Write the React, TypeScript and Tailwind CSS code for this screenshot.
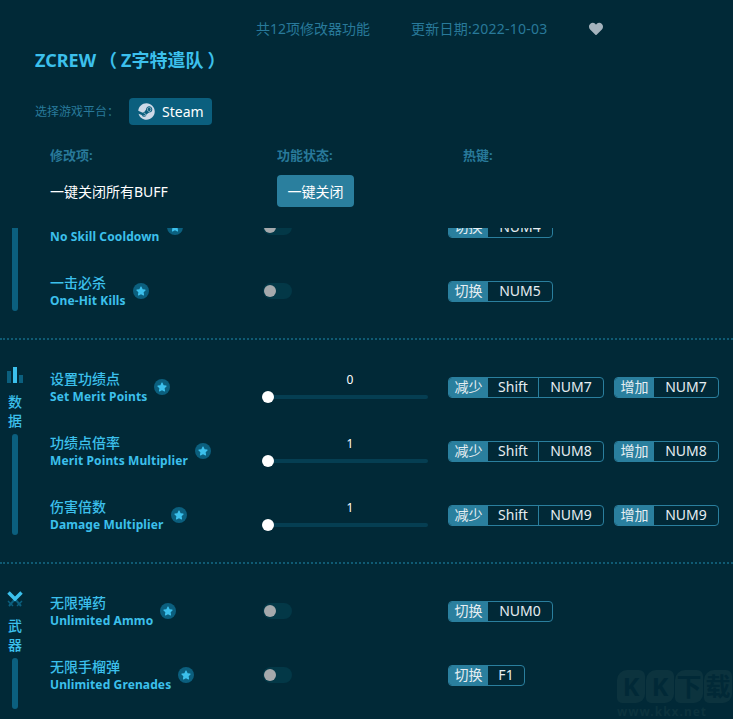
import { FaHeart, FaStar, FaSteam } from "react-icons/fa";

const cjk = "font-['Noto_Sans','Noto_Sans_CJK_SC',sans-serif]";

type Hotkey = { label: string; keys: string[] };

type Feature = {
  zh: string;
  en: string;
  value?: number;
  hotkeys: Hotkey[];
};

const keyWidth = (k: string) => {
  if (k === "Shift") return "w-[51px] border-r border-[#2a7f9e]";
  if (k === "F1") return "w-[36px]";
  return "w-[64px]";
};

const Star = () => (
  <span className="flex h-4 w-4 shrink-0 items-center justify-center rounded-full bg-[#0b5f7e]">
    <FaStar className="text-[10px] text-[#3cc0ec]" />
  </span>
);

const Toggle = () => (
  <div className="flex h-4 w-[29px] items-center rounded-full bg-[#033847] pl-px">
    <span className="h-3 w-3 rounded-full bg-[#a5a9ac]" />
  </div>
);

const Slider = ({ value }: { value: number }) => (
  <div className="w-[174px] pb-[4px]">
    <div className="h-[16px] text-center text-[12px] leading-[16px] text-white">{value}</div>
    <div className="relative mt-[7px] ml-[5px] h-1 w-[160px] rounded-full bg-[#053e52]">
      <span className="absolute -left-[6px] -top-1 h-3 w-3 rounded-full bg-white" />
    </div>
  </div>
);

const HotkeyTag = ({ label, keys }: Hotkey) => (
  <div className="flex h-[21px] overflow-hidden rounded-[4px] border border-[#2a7f9e] text-[14px] leading-[18px] text-[#e6eef2]">
    <span className="w-[39px] bg-[#2a7f9e] text-center">{label}</span>
    {keys.map((k) => (
      <span key={k} className={`text-center ${keyWidth(k)}`}>
        {k}
      </span>
    ))}
  </div>
);

const Row = ({ f }: { f: Feature }) => (
  <div className="flex h-16 items-center">
    <div className="flex w-[213px] items-center gap-[7px]">
      <div>
        <div className="text-[14px] font-medium leading-[17px] text-[#3cc0ec]">{f.zh}</div>
        <div className="mt-px text-[12px] font-bold leading-[17px] tracking-[0.12px] text-[#3cc0ec]">{f.en}</div>
      </div>
      <Star />
    </div>
    <div className="w-[185px]">{f.value === undefined ? <Toggle /> : <Slider value={f.value} />}</div>
    <div className="flex gap-[10px]">
      {f.hotkeys.map((h) => (
        <HotkeyTag key={h.label} {...h} />
      ))}
    </div>
  </div>
);

const toggleKey = (key: string): Hotkey[] => [{ label: "切换", keys: [key] }];

const sliderKeys = (key: string): Hotkey[] => [
  { label: "减少", keys: ["Shift", key] },
  { label: "增加", keys: [key] },
];

const general: Feature[] = [
  { zh: "无技能冷却", en: "No Skill Cooldown", hotkeys: toggleKey("NUM4") },
  { zh: "一击必杀", en: "One-Hit Kills", hotkeys: toggleKey("NUM5") },
];

const data: Feature[] = [
  { zh: "设置功绩点", en: "Set Merit Points", value: 0, hotkeys: sliderKeys("NUM7") },
  { zh: "功绩点倍率", en: "Merit Points Multiplier", value: 1, hotkeys: sliderKeys("NUM8") },
  { zh: "伤害倍数", en: "Damage Multiplier", value: 1, hotkeys: sliderKeys("NUM9") },
];

const weapons: Feature[] = [
  { zh: "无限弹药", en: "Unlimited Ammo", hotkeys: toggleKey("NUM0") },
  { zh: "无限手榴弹", en: "Unlimited Grenades", hotkeys: toggleKey("F1") },
];

const BarsIcon = () => (
  <svg width="16" height="16" viewBox="0 0 16 16">
    <rect x="0" y="4" width="4" height="12" fill="#0b5f7e" />
    <rect x="6" y="0" width="4" height="16" fill="#3cc0ec" />
    <rect x="12" y="8" width="4" height="8" fill="#0b5f7e" />
  </svg>
);

const SwordsIcon = () => (
  <svg width="16" height="16" viewBox="0 0 16 16">
    <path d="M8 8 L14 15 M8 8 L2 15" stroke="#0b5f7e" strokeWidth="2" />
    <path d="M1 10 L6 15 M15 10 L10 15" stroke="#0b5f7e" strokeWidth="1.5" />
    <path d="M1.5 1.5 L8 8 L14.5 1.5" fill="none" stroke="#3cc0ec" strokeWidth="3.5" />
  </svg>
);

const SideLabel = ({ chars }: { chars: string[] }) => (
  <div className="mt-[9px] text-center text-[14px] font-medium leading-[19px] text-[#3cc0ec]">
    {chars.map((c) => (
      <div key={c}>{c}</div>
    ))}
  </div>
);

const Mark = ({ c }: { c: string }) => (
  <span className="flex h-[33px] w-[28px] items-center justify-center rounded-[10px_6px_9px_5px] bg-[#0c333e] text-[25px] font-bold leading-none text-[#012937]">
    {c}
  </span>
);

export default function App() {
  return (
    <div className={`relative h-[719px] w-[733px] overflow-hidden bg-[#012937] ${cjk}`}>
      {/* top info */}
      <div className="flex h-[56px] items-center pl-[256px] pt-[1px] text-[14px] text-[#28799a]">
        <span>共12项修改器功能</span>
        <span className="ml-[41px] tracking-[0.25px]">更新日期:2022-10-03</span>
        <FaHeart className="ml-[41px] text-[14px] text-[#a5b3bd]" />
      </div>

      <h1 className="h-[9px] pl-[35px] text-[18px] font-bold leading-[9px] text-[#3cc0ec]">
        ZCREW<span className="ml-[3px] mr-[4px]">（</span>Z字特遣队<span className="ml-[4px]">）</span>
      </h1>

      <div className="mt-[33px] flex items-center pl-[35px]">
        <span className="w-[94px] text-[12px] text-[#28799a]">选择游戏平台：</span>
        <div className="flex h-[27px] w-[83px] items-center gap-[7px] rounded-[4px] bg-[#0b5f7e] pl-[9px] text-[14px] text-white">
          <FaSteam className="text-[17px] text-[#cdd9e8]" />
          <span>Steam</span>
        </div>
      </div>

      {/* column heads */}
      <div className="mt-[20px] flex pl-[50px] text-[13px] font-bold leading-[20px] text-[#28799a]">
        <span className="w-[227px]">修改项:</span>
        <span className="w-[186px]">功能状态:</span>
        <span>热键:</span>
      </div>

      <div className="mt-[10px] flex items-center pl-[50px]">
        <span className="w-[227px] text-[14px] text-white">一键关闭所有BUFF</span>
        <button className="h-[32px] w-[77px] rounded-[4px] bg-[#2a7f9e] text-[14px] text-white">一键关闭</button>
      </div>

      <div className="mt-[21px] h-[491px] overflow-hidden">
        <div className="-mt-[33px]">
          <section className="flex border-b-2 border-dotted border-[#0f5a73] pb-[15px]">
            <div className="flex w-[30px] flex-col items-center">
              <div className="mb-3 w-[6px] flex-1 rounded-full bg-[#0b5f7e]" />
            </div>
            <div className="ml-[20px]">
              {general.map((f) => (
                <Row key={f.en} f={f} />
              ))}
            </div>
          </section>

          <section className="flex border-b-2 border-dotted border-[#0f5a73] pb-[15px] pt-[15px]">
            <div className="flex w-[30px] flex-col items-center pt-3">
              <BarsIcon />
              <SideLabel chars={["数", "据"]} />
              <div className="mb-3 mt-[4px] w-[6px] flex-1 rounded-full bg-[#0b5f7e]" />
            </div>
            <div className="ml-[20px]">
              {data.map((f) => (
                <Row key={f.en} f={f} />
              ))}
            </div>
          </section>

          <section className="flex pt-[15px]">
            <div className="flex w-[30px] flex-col items-center pt-3">
              <SwordsIcon />
              <SideLabel chars={["武", "器"]} />
              <div className="mt-[4px] h-[51px] w-[6px] rounded-full bg-[#0b5f7e]" />
            </div>
            <div className="ml-[20px]">
              {weapons.map((f) => (
                <Row key={f.en} f={f} />
              ))}
            </div>
          </section>
        </div>
      </div>

      {/* site watermark */}
      <div className="absolute bottom-0 left-[617px] flex w-[114px] flex-col items-start">
        <div className="flex gap-[1px]">
          <Mark c="K" />
          <Mark c="K" />
          <Mark c="下" />
          <Mark c="载" />
        </div>
        <span className="mt-[2px] text-[12px] font-bold leading-[14px] tracking-[1px] text-[#0c333e]">www.kkx.net</span>
      </div>
    </div>
  );
}
